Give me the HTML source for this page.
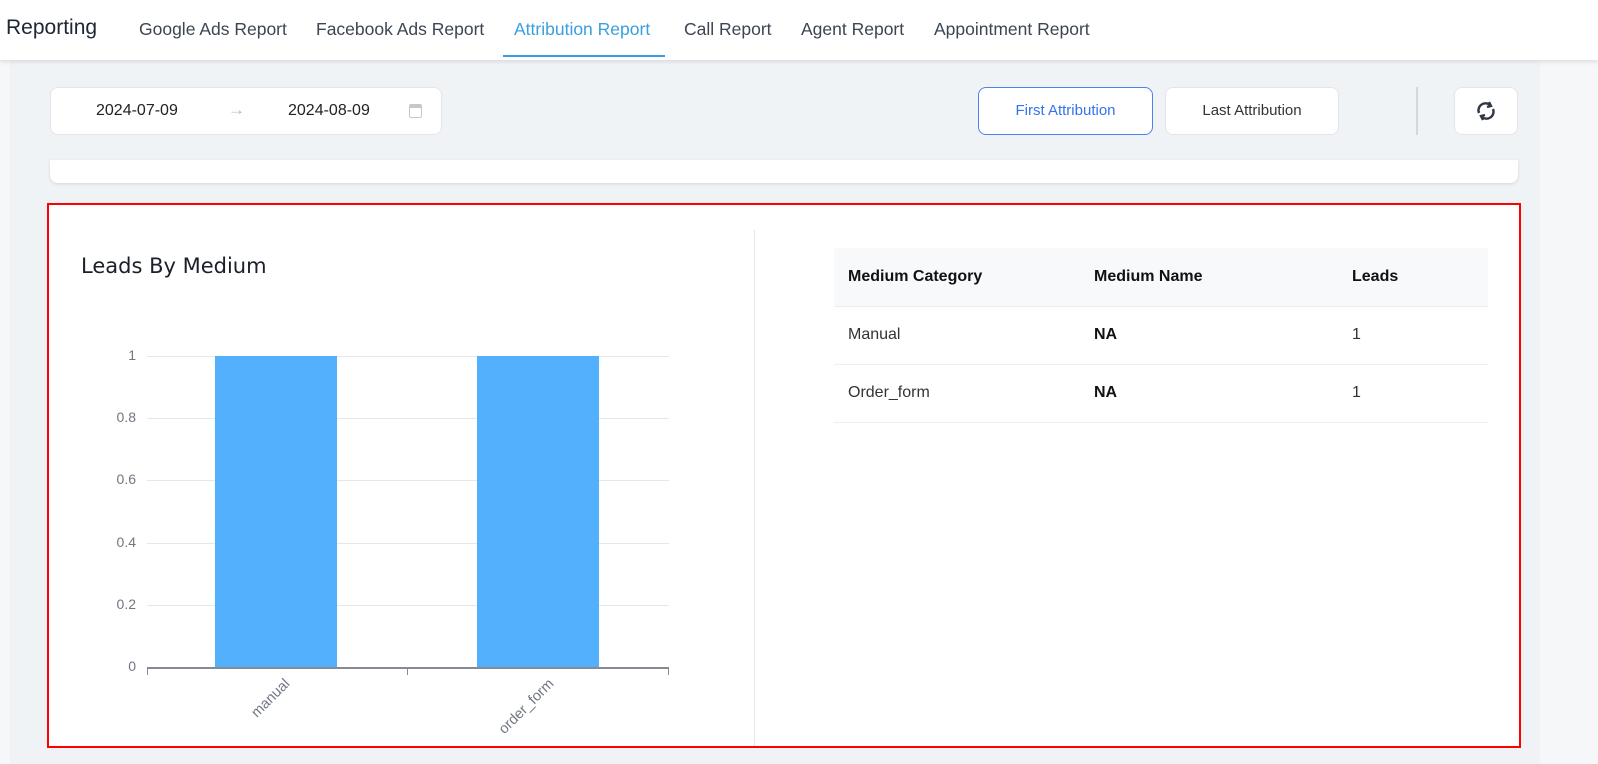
<!DOCTYPE html>
<html><head><meta charset="utf-8"><style>
*{margin:0;padding:0;box-sizing:border-box}
body{width:1598px;height:764px;overflow:hidden;background:#f0f3f6;font-family:"Liberation Sans",sans-serif;position:relative}
.a{position:absolute}
.nav{left:0;top:0;width:1598px;height:60px;background:#fff;box-shadow:0 2px 4px rgba(0,0,0,.1)}
.tab{top:19px;font-size:17.5px;color:#3d4552}
.card{background:#fff;border:1px solid #e2e6ec;border-radius:8px}
.yl{font-size:14px;color:#707784;text-align:right;width:30px;left:106px}
.g{left:147px;width:522px;height:1px;background:#e3e7ef}
th,td{text-align:left;padding-left:14px}
</style></head><body>
<div class="a" style="left:0;top:60px;width:10px;height:704px;background:#f5f7f9"></div>
<div class="a" style="left:1540px;top:60px;width:58px;height:704px;background:#f5f7f9"></div>
<div class="a nav"></div>
<div class="a" style="left:6px;top:16px;font-size:21px;color:#1f2633">Reporting</div>
<div class="a tab" style="left:139px">Google Ads Report</div>
<div class="a tab" style="left:316px">Facebook Ads Report</div>
<div class="a tab" style="left:514px;color:#3a9fe0">Attribution Report</div>
<div class="a" style="left:503px;top:55px;width:162px;height:2px;background:#3a9fe0"></div>
<div class="a tab" style="left:684px">Call Report</div>
<div class="a tab" style="left:801px">Agent Report</div>
<div class="a tab" style="left:934px">Appointment Report</div>

<div class="a card" style="left:50px;top:87px;width:392px;height:48px"></div>
<div class="a" style="left:96px;top:102px;font-size:16px;color:#222">2024-07-09</div>
<div class="a" style="left:228px;top:100px;font-size:17px;color:#b5bac2">→</div>
<div class="a" style="left:288px;top:102px;font-size:16px;color:#222">2024-08-09</div>
<div class="a" style="left:409px;top:104px;width:13px;height:14px;border:1.5px solid #c4c8ce;border-radius:2px;border-top-width:4px"></div>

<div class="a" style="left:978px;top:87px;width:175px;height:48px;border:1px solid #4b82ef;border-radius:8px;background:#fff;color:#3572ef;font-size:15px;text-align:center;line-height:46px">First Attribution</div>
<div class="a card" style="left:1165px;top:87px;width:174px;height:48px;color:#333;font-size:15px;text-align:center;line-height:46px">Last Attribution</div>
<div class="a" style="left:1416px;top:87px;width:2px;height:48px;background:#d3d7dc"></div>
<div class="a card" style="left:1454px;top:87px;width:64px;height:48px"></div>
<svg class="a" style="left:1474px;top:100px" width="24" height="22" viewBox="0 0 24 22" fill="none" stroke="#2f3744" stroke-width="2.4"><path d="M5 13a7 7 0 0 1 11-8"/><path d="M19 9a7 7 0 0 1-11 8"/><path d="M15 2l2 4-4 1" /><path d="M9 20l-2-4 4-1"/></svg>

<div class="a" style="left:50px;top:160px;width:1468px;height:23px;background:#fff;border-radius:0 0 8px 8px;box-shadow:0 1px 3px rgba(0,0,0,.12)"></div>

<div class="a" style="left:47px;top:203px;width:1474px;height:545px;background:#fff;border:2.5px solid #f00"></div>
<div class="a" style="left:754px;top:230px;width:1px;height:516px;background:#e3e6ea"></div>
<div class="a" style="left:81px;top:254px;font-size:21px;color:#1a1f2b;font-family:'DejaVu Sans',sans-serif">Leads By Medium</div>

<div class="a g" style="top:356px"></div>
<div class="a g" style="top:418px"></div>
<div class="a g" style="top:480px"></div>
<div class="a g" style="top:543px"></div>
<div class="a g" style="top:605px"></div>
<div class="a yl" style="top:347px">1</div>
<div class="a yl" style="top:409px">0.8</div>
<div class="a yl" style="top:471px">0.6</div>
<div class="a yl" style="top:534px">0.4</div>
<div class="a yl" style="top:596px">0.2</div>
<div class="a yl" style="top:658px">0</div>
<div class="a" style="left:215px;top:356px;width:122px;height:312px;background:#53b0fd"></div>
<div class="a" style="left:477px;top:356px;width:122px;height:312px;background:#53b0fd"></div>
<div class="a" style="left:147px;top:667px;width:522px;height:2px;background:#858a93"></div>
<div class="a" style="left:147px;top:667px;width:1px;height:8px;background:#858a93"></div>
<div class="a" style="left:407px;top:667px;width:1px;height:8px;background:#858a93"></div>
<div class="a" style="left:668px;top:667px;width:1px;height:8px;background:#858a93"></div>
<div class="a" style="left:282px;top:676px;font-size:14.5px;color:#707784;transform:rotate(-45deg);transform-origin:right top;width:70px;text-align:right;margin-left:-70px">manual</div>
<div class="a" style="left:546px;top:676px;font-size:14.5px;color:#707784;transform:rotate(-45deg);transform-origin:right top;width:100px;text-align:right;margin-left:-100px">order_form</div>

<table class="a" style="left:834px;top:248px;width:654px;border-collapse:collapse;font-size:16px">
<tr style="background:#f8f9fb;height:58px;border-bottom:1px solid #eceef2;color:#111;font-weight:bold"><th style="width:246px">Medium Category</th><th style="width:258px">Medium Name</th><th>Leads</th></tr>
<tr style="height:58px;border-bottom:1px solid #eceef2;color:#333"><td>Manual</td><td style="font-weight:bold;color:#111">NA</td><td>1</td></tr>
<tr style="height:58px;border-bottom:1px solid #eceef2;color:#333"><td>Order_form</td><td style="font-weight:bold;color:#111">NA</td><td>1</td></tr>
</table>
</body></html>
